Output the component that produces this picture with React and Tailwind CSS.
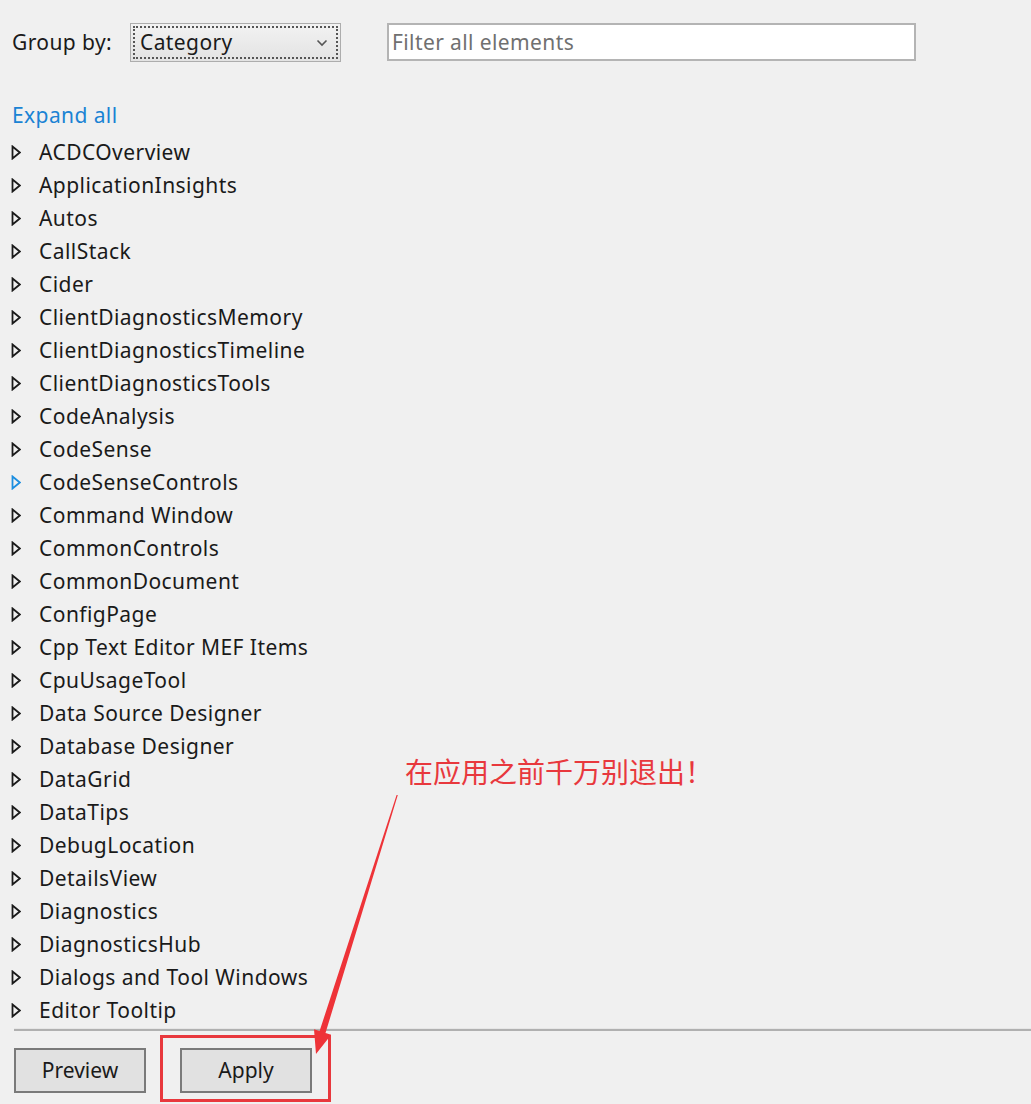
import React from "react";

const items = [
  "ACDCOverview",
  "ApplicationInsights",
  "Autos",
  "CallStack",
  "Cider",
  "ClientDiagnosticsMemory",
  "ClientDiagnosticsTimeline",
  "ClientDiagnosticsTools",
  "CodeAnalysis",
  "CodeSense",
  "CodeSenseControls",
  "Command Window",
  "CommonControls",
  "CommonDocument",
  "ConfigPage",
  "Cpp Text Editor MEF Items",
  "CpuUsageTool",
  "Data Source Designer",
  "Database Designer",
  "DataGrid",
  "DataTips",
  "DebugLocation",
  "DetailsView",
  "Diagnostics",
  "DiagnosticsHub",
  "Dialogs and Tool Windows",
  "Editor Tooltip",
];

function Tri({ blue }) {
  return (
    <svg width="10" height="15" viewBox="0 0 10 15" className="shrink-0">
      <path
        d="M1.5 1.5 L8.8 7.5 L1.5 13.5 Z"
        fill="none"
        stroke={blue ? "#1c8ee0" : "#1a1a1a"}
        strokeWidth="1.8"
        strokeLinejoin="miter"
      />
    </svg>
  );
}

export default function App() {
  return (
    <div
      className="relative w-[1031px] h-[1104px] overflow-hidden bg-[#f0f0f0] text-[#1a1a1a]"
      style={{ fontFamily: '"Noto Sans", "Noto Sans CJK SC", sans-serif' }}
    >
      <div className="flex flex-col pt-[22px]">
        {/* header */}
        <div className="flex items-center h-[40px] pl-[12px]">
          <span className="text-[21px] tracking-[0.4px] leading-none w-[118px]">Group by:</span>
          <div className="relative flex items-center w-[211px] h-[39px] border border-[#adadad] bg-gradient-to-b from-[#f2f2f2] to-[#e3e3e3]">
            <div className="absolute inset-[2px] border-[2px] border-dotted border-[#555]" />
            <span className="pl-[9px] text-[21px] tracking-[0.4px] leading-none">Category</span>
            <svg
              width="12"
              height="8"
              viewBox="0 0 12 8"
              className="absolute right-[12px] top-[15px]"
            >
              <path d="M1.5 1.5 L6 6 L10.5 1.5" fill="none" stroke="#555" strokeWidth="1.6" />
            </svg>
          </div>
          <div className="ml-[46px] flex items-center w-[529px] h-[38px] border-[2px] border-[#b4b4b4] bg-white">
            <span className="pl-[3px] text-[21px] tracking-[0.4px] leading-none text-[#707070]">
              Filter all elements
            </span>
          </div>
        </div>

        {/* expand all */}
        <div className="mt-[37px] h-[32px] flex items-center pl-[12px]">
          <span className="text-[21px] tracking-[0.4px] leading-none text-[#1a83d4]">Expand all</span>
        </div>

        {/* list */}
        <div className="mt-[5px] flex flex-col">
          {items.map((t) => (
            <div key={t} className="h-[33px] flex items-center pl-[11px]">
              <Tri blue={t === "CodeSenseControls"} />
              <span className="ml-[18px] text-[21px] tracking-[0.45px] leading-none whitespace-nowrap">{t}</span>
            </div>
          ))}
        </div>

        {/* separator */}
        <div className="ml-[14px] mt-[1px] h-[3px] border-t border-[#e6e6e6] bg-[#b0b0b0]" />

        {/* buttons */}
        <div className="flex pl-[14px] mt-[17px] gap-[34px]">
          <div className="w-[132px] h-[45px] flex items-center justify-center border-[2px] border-[#7a7a7a] bg-[#e1e1e1] text-[21px] leading-none">
            Preview
          </div>
          <div className="w-[132px] h-[45px] flex items-center justify-center border-[2px] border-[#7a7a7a] bg-[#e1e1e1] text-[21px] leading-none">
            Apply
          </div>
        </div>
      </div>

      {/* annotation */}
      <div
        className="absolute left-[405px] top-[757px] text-[28px] leading-none text-[#e8383d] whitespace-nowrap"
        style={{ fontFamily: '"Noto Sans CJK SC", sans-serif' }}
      >
        在应用之前千万别退出！
      </div>
      <div className="absolute left-[160px] top-[1035px] w-[171px] h-[67px] border-[3px] border-[#e8383d]" />
      <svg className="absolute left-0 top-0 pointer-events-none" width="1031" height="1104">
        <polygon
          points="397.8,795 396.6,795 319.6,1031 314,1029.3 316,1054 331.2,1034.7 325.5,1033"
          fill="#ee3338"
        />
      </svg>
    </div>
  );
}
